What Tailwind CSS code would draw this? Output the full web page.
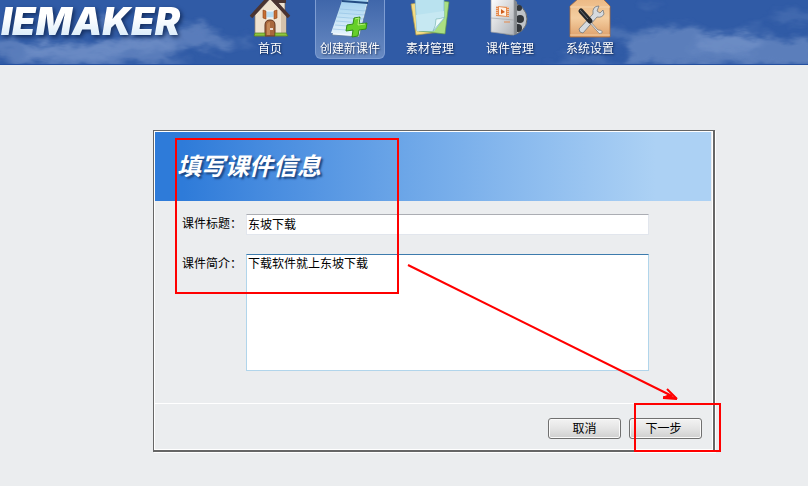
<!DOCTYPE html>
<html lang="zh-CN">
<head>
  <meta charset="UTF-8">
  <meta name="viewport" content="width=device-width, initial-scale=1.0">
  <title>IEMAKER - 创建新课件</title>
  <script src="https://cdn.jsdelivr.net/npm/@tailwindcss/browser@4"></script>
</head>
<body class="relative min-h-screen bg-[#ebedef] font-['Liberation_Sans','Noto_Sans_CJK_SC',sans-serif] text-xs text-black overflow-x-hidden">
  <!-- 顶部 -->
  <header class="relative h-[65px] bg-[#305ba6] border-b border-[#2450a0] overflow-hidden">
    <svg class="absolute inset-0 w-full h-full" viewBox="0 0 808 65" preserveAspectRatio="none" aria-hidden="true">
      <defs>
        <filter id="cloud" x="-5%" y="-30%" width="110%" height="160%">
          <feGaussianBlur stdDeviation="3" result="b" />
          <feTurbulence type="fractalNoise" baseFrequency="0.05 0.09" numOctaves="4" seed="4" result="n" />
          <feDisplacementMap in="b" in2="n" scale="18" xChannelSelector="R" yChannelSelector="G" />
          <feGaussianBlur stdDeviation=".8" />
        </filter>
      </defs>
      <g filter="url(#cloud)" fill="#9db3dd">
        <path opacity=".38" d="M-10 38L30 42 70 48 110 40 150 38 180 26 202 22 212 34 236 40 220 50 185 48 165 58 192 66 20 66-10 52z" />
        <path opacity=".25" d="M20 46L110 42 170 36 175 46 100 58 30 60z" />
        <path opacity=".3" d="M95 20L112 12 120 28 100 30z" />
        <path opacity=".25" d="M236 44L246 36 252 48z" />
        <path opacity=".2" d="M545 66L570 56 600 56 625 66z" />
        <path opacity=".25" d="M590 36L620 28 645 32 630 40 595 44z" />
        <path opacity=".4" d="M630 38L660 28 690 27 720 34 750 33 775 40 815 38 815 66 630 66z" />
        <path opacity=".25" d="M700 38L740 33 770 44 740 54 690 50z" />
        <path opacity=".2" d="M765 14L815 12 815 20 780 22zM640 2L660 4 650 9zM745 24L765 22 758 29z" />
      </g>
    </svg>
    <div class="relative flex h-full">
      <div class="w-[235px] shrink-0">
        <h1 class="w-fit pr-2 pl-px font-['Inter',sans-serif] text-[38px] leading-[43px] font-black italic whitespace-nowrap bg-linear-to-b from-white from-40% to-[#cfe6f8] bg-clip-text text-transparent drop-shadow-[2px_2px_2px_rgba(10,30,70,0.75)]">IEMAKER</h1>
      </div>
      <nav class="flex gap-[10px] text-white text-center leading-4 [text-shadow:1px_1px_2px_#12274f]">
        <a href="#" class="block w-[70px] h-[60px]">
          <svg class="block mx-auto w-[50px] h-[41px]" viewBox="0 0 50 41" aria-hidden="true">
            <path d="M32-2h8v14l-8-7z" fill="#eee3d3" stroke="#6f5a4d" stroke-width=".7" />
            <path d="M31 0h10v3H31z" fill="#4a3532" />
            <path d="M10 15L25-1 41 15v21H10z" fill="#efe2d0" stroke="#9c8168" stroke-width=".7" />
            <path d="M36 11l5 4v21h-5z" fill="#d5c2ab" />
            <path d="M6 17L25-4 44 17" fill="none" stroke="#4b3432" stroke-width="3.5" stroke-linejoin="round" />
            <path d="M21 11h8v7h-8z" fill="#b7dcf2" stroke="#fff" />
            <path d="M18 10l3 1v8l-3-1zM32 10l-3 1v8l3-1z" fill="#c66e32" stroke="#8c431c" stroke-width=".6" />
            <path d="M20 36V25q0-5 5-5t5 5v11z" fill="#a9683c" stroke="#663820" />
            <path d="M22 35V25q0-3 3-3v13z" fill="#c58958" />
            <path d="M25 29h3" stroke="#fff" stroke-width="1.5" />
            <path d="M10 33h10v3H9zM30 33h11l2 3H30z" fill="#8ec53d" stroke="#527d20" stroke-width=".7" />
          </svg>
          首页
        </a>
        <a href="#" class="block w-[70px] h-[60px] -mt-px pt-px rounded-b-md border border-t-0 border-[#7e9dd2] bg-linear-to-b from-[#3f66aa] to-[#688ac2] whitespace-nowrap" aria-current="page">
          <svg class="block mx-auto w-[50px] h-[41px]" viewBox="0 0 50 41" aria-hidden="true">
            <defs>
              <linearGradient id="note" x1="0" y1="0" x2="0" y2="1">
                <stop offset="0" stop-color="#9ed0ef" />
                <stop offset="1" stop-color="#e6f3fb" />
              </linearGradient>
            </defs>
            <path d="M18-2L7 35l27 2L44-2z" fill="#f4f8fb" stroke="#59789c" stroke-width=".8" />
            <path d="M18-2L6 33l28 2L43-2z" fill="url(#note)" />
            <path d="M17 1l26 2" stroke="#234d83" stroke-width="2" />
            <path d="M15 9l26 2M14 13l26 2M12 17l26 2M11 21l26 2M10 25l26 2M8 29l26 2" stroke="#8fc0e2" stroke-width=".6" />
            <path d="M29 18l6-1-1 7 8-1-1 6-7 1-1 6-6 1 1-7-7 1 1-6 6-1z" fill="#66cf28" stroke="#318d16" stroke-linejoin="round" />
            <path d="M30 19l4-1-1 7 7-1" fill="none" stroke="#b7f07c" />
          </svg>
          创建新课件
        </a>
        <a href="#" class="block w-[70px] h-[60px]">
          <svg class="block mx-auto w-[50px] h-[41px]" viewBox="0 0 50 41" aria-hidden="true">
            <path d="M6 4l25-4 4 32-24 3z" fill="#f5dc83" stroke="#ac974b" stroke-width=".7" />
            <path d="M20-2l24 4-4 32-26-3z" fill="#aadf82" stroke="#63984b" stroke-width=".7" />
            <path d="M10-2h29v20L29 31H12z" fill="#b9e2ef" stroke="#78b3ce" stroke-width=".7" />
            <path d="M11 15l28-4v7L29 31H12z" fill="#c6e8f2" />
            <path d="M40 17q-5 2-9 2 0 7-3 12z" fill="#eafafa" stroke="#7fb8b6" stroke-width=".7" />
          </svg>
          素材管理
        </a>
        <a href="#" class="block w-[70px] h-[60px]">
          <svg class="block mx-auto w-[50px] h-[41px]" viewBox="0 0 50 41" aria-hidden="true">
            <defs>
              <linearGradient id="cover" x1="0" y1="0" x2="1" y2="1">
                <stop offset="0" stop-color="#fff" />
                <stop offset="1" stop-color="#aeb2b7" />
              </linearGradient>
            </defs>
            <circle cx="26" cy="19" r="16" fill="#bfc3c7" stroke="#65696d" />
            <circle cx="34" cy="8" r="3" fill="#32363a" />
            <circle cx="35" cy="19" r="4" fill="#32363a" />
            <circle cx="33" cy="28" r="4" fill="#32363a" />
            <path d="M26-2h2l4 4v32l-5 1z" fill="#85898d" />
            <path d="M6-2h23v37L6 32z" fill="url(#cover)" stroke="#9b9fa3" stroke-width=".7" />
            <path d="M6 18l23 2" stroke="#a5a8ab" stroke-width=".7" />
            <path d="M11 6l13 1v10l-13-1z" fill="#e58a4c" />
            <path d="M14 7l7 1v8l-7-1z" fill="#fff1e3" />
            <path d="M16 9l4 3-4 2z" fill="#cf5c1c" />
            <path d="M12 6v10M23 7v10" stroke="#fff" stroke-dasharray="1 1" />
            <path d="M19 22h6" stroke="#e58a4c" />
          </svg>
          课件管理
        </a>
        <a href="#" class="block w-[70px] h-[60px]">
          <svg class="block mx-auto w-[50px] h-[41px]" viewBox="0 0 50 41" aria-hidden="true">
            <defs>
              <linearGradient id="box" x1="0" y1="0" x2="0" y2="1">
                <stop offset="0" stop-color="#ecb984" />
                <stop offset=".5" stop-color="#f4cea0" />
                <stop offset="1" stop-color="#dea06a" />
              </linearGradient>
            </defs>
            <path d="M5 6l8-7h25l7 7v31H5z" fill="url(#box)" stroke="#a96c3e" stroke-width=".8" />
            <path d="M5 7h40M5 35h40" stroke="#f9dcb6" stroke-width=".8" />
            <path d="M15 32l3 1 14-16q5 1 7-3l-1-4-3 3-3-2 2-5q-7 0-6 8L14 29z" fill="#d6dade" stroke="#666d74" stroke-width=".7" />
            <path d="M24 20l9 10q5 0 4 3-3 2-5-2l-9-10z" fill="#e7e9eb" stroke="#777" stroke-width=".7" />
            <path d="M16 11l9 10" stroke="#25282b" stroke-width="5" stroke-linecap="round" />
            <path d="M15 10l8 9" stroke="#6c7074" stroke-width="1" />
          </svg>
          系统设置
        </a>
      </nav>
      <a href="#" class="ml-auto mr-3 -mt-[13px] leading-4 text-white">帮助</a>
    </div>
  </header>

  <!-- 课件信息 -->
  <main class="pt-[65px] pl-[153px] pr-[93px] pb-[34px]">
    <form class="border-t border-l border-r-2 border-b-2 border-[#666] shadow-[1px_1px_0_#fff]">
      <div class="border border-white">
        <div class="h-[69px] pl-[22px] pt-[15px] mr-px bg-linear-to-r from-[#2e7bd9] from-5% via-[#6ca6e8] via-45% to-[#acd1f4] to-90%">
          <h2 class="font-['Noto_Sans_CJK_SC',sans-serif] text-2xl leading-9 font-bold italic text-white [text-shadow:2px_2px_2px_#1b4580]">填写课件信息</h2>
        </div>
        <div class="flex flex-col gap-[19px] pl-[27px] pr-[63px] pt-[13px] pb-8">
          <div class="flex">
            <label for="title" class="w-16 shrink-0 leading-5">课件标题：</label>
            <input id="title" type="text" value="东坡下载" class="min-w-0 flex-1 h-[21px] px-px pb-[3px] bg-white border border-[#e2e6ed] border-t-[#abadb3]">
          </div>
          <div class="flex">
            <label for="intro" class="w-16 shrink-0 leading-5">课件简介：</label>
            <textarea id="intro" class="min-w-0 flex-1 h-[117px] px-px leading-[18px] resize-none bg-white border border-[#b1d5eb] border-t-[#3d7bad]">下载软件就上东坡下载</textarea>
          </div>
        </div>
        <div class="flex justify-end gap-2 border-t border-white pt-[14px] pr-[10px] pb-[10px]">
          <button type="button" class="w-[73px] h-[21px] rounded-[3px] border border-[#707070] bg-linear-to-b from-[#f3f3f3] via-[#e4e4e4] to-[#cfcfcf] shadow-[inset_0_0_0_1px_#fafafa] leading-4">取消</button>
          <button type="submit" class="w-[73px] h-[21px] pr-1 rounded-[3px] border border-[#707070] bg-linear-to-b from-[#f3f3f3] via-[#e4e4e4] to-[#cfcfcf] shadow-[inset_0_0_0_1px_#fafafa] leading-4">下一步</button>
        </div>
      </div>
    </form>
  </main>

  <!-- 操作标注 -->
  <svg class="absolute left-0 top-0 w-[808px] h-[486px] pointer-events-none" viewBox="0 0 808 486" fill="none" stroke="#f00" stroke-width="2" aria-hidden="true">
    <path d="M176 139h222v154H176zM635 404h85v47h-85z" />
    <path d="M408 265L672 396" />
    <path d="M677 399l-14-2 6-2z" fill="#f00" stroke-width="1" />
    <path d="M677 399l-10-10M677 399l-14-1" />
  </svg>
</body>
</html>
